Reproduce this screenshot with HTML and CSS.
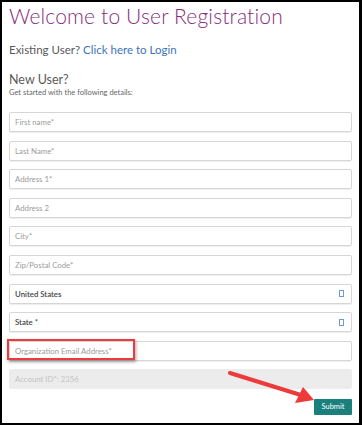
FILE: index.html
```html
<!DOCTYPE html>
<html lang="en">
<head>
<meta charset="utf-8">
<title>Welcome to User Registration</title>
<link rel="stylesheet" href="styles.css">
</head>
<body>
<div class="frame">
  <h1 class="title">Welcome to User Registration</h1>
  <p class="existing">Existing User? <a class="login" href="#">Click here to Login</a></p>
  <p class="new">New User?</p>
  <p class="hint">Get started with the following details:</p>
  <form class="form">
    <div class="field"><span class="ph">First name*</span></div>
    <div class="field"><span class="ph">Last Name*</span></div>
    <div class="field"><span class="ph">Address 1*</span></div>
    <div class="field"><span class="ph">Address 2</span></div>
    <div class="field"><span class="ph">City*</span></div>
    <div class="field"><span class="ph">Zip/Postal Code*</span></div>
    <div class="field select"><span class="val">United States</span><span class="caret"></span></div>
    <div class="field select"><span class="val">State *</span><span class="caret"></span></div>
    <div class="field"><span class="ph">Organization Email Address*</span></div>
    <div class="field disabled"><span class="ph">Account ID*: 2356</span></div>
    <div class="actions"><button type="button" class="submit">Submit</button></div>
  </form>
  <div class="highlight"></div>
  <svg class="arrow" width="100" height="40" viewBox="0 0 100 40">
    <line x1="4" y1="5" x2="78" y2="28" stroke="#ee3a3a" stroke-width="4" stroke-linecap="round"/>
    <polygon points="88,32 69,35 77,19" fill="#ee3a3a"/>
  </svg>
</div>
</body>
</html>
```
FILE: styles.css
```css
html, body {
  margin: 0;
  padding: 0;
  background: #fff;
}
.frame {
  box-sizing: border-box;
  width: 362px;
  height: 425px;
  border: 2px solid #000;
  border-right-width: 3px;
  border-bottom-width: 2px;
  padding: 0 7px;
  position: relative;
  font-family: Lato, "Open Sans", sans-serif;
  overflow: hidden;
}
.title {
  margin: 0;
  padding-top: 2px;
  font-size: 21px;
  line-height: 24px;
  font-weight: 300;
  color: #862e7e;
  letter-spacing: 0.15px;
}
.existing {
  margin: 15px 0 0;
  font-size: 11.5px;
  line-height: 14px;
  color: #5a5a5a;
}
.login {
  color: #3e73b8;
  text-decoration: none;
}
.new {
  margin: 15px 0 0;
  font-size: 12.5px;
  line-height: 15px;
  color: #5a5a5a;
}
.hint {
  margin: 1px 0 0;
  font-size: 7.5px;
  line-height: 10px;
  color: #666;
}
.form {
  margin-top: 14px;
  display: flex;
  flex-direction: column;
  gap: 8.6px;
}
.field {
  box-sizing: border-box;
  height: 20px;
  border: 1px solid #d6d6d6;
  border-radius: 2px;
  box-shadow: 0 1px 1px rgba(0, 0, 0, 0.07);
  display: flex;
  align-items: center;
  padding: 0 5px;
  font-size: 7.8px;
}
.ph {
  color: #9c9c9c;
}
.val {
  color: #444;
  font-weight: 600;
  flex: 1;
}
.caret {
  width: 3px;
  height: 5px;
  border: 1px solid #6a9ad8;
  margin-right: 2px;
}
.disabled {
  background: #ececec;
  border-color: #ececec;
  box-shadow: none;
}
.disabled .ph {
  color: #c4c4c4;
}
.actions {
  display: flex;
  justify-content: flex-end;
  margin-top: 1px;
}
.submit {
  box-sizing: border-box;
  width: 38px;
  height: 16px;
  border: none;
  border-radius: 1px;
  background: #1b7f7d;
  color: #fff;
  font-family: Lato, sans-serif;
  font-size: 7.5px;
  padding: 0;
}
.highlight {
  position: absolute;
  left: 5px;
  top: 337px;
  width: 124px;
  height: 17px;
  border: 2px solid #ec3a3f;
  box-shadow: 1px 2px 3px rgba(0, 0, 0, 0.35);
}
.arrow {
  position: absolute;
  left: 224px;
  top: 366px;
}
```
